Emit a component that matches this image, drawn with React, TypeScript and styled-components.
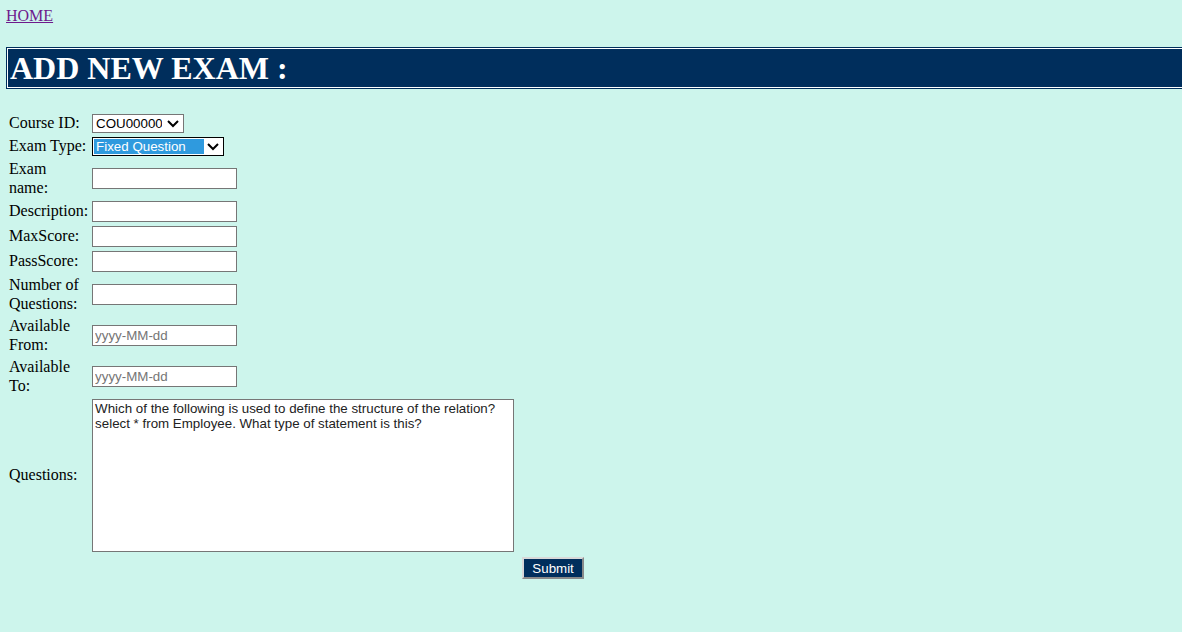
import React from 'react';
import styled, { createGlobalStyle } from 'styled-components';

const GlobalStyle = createGlobalStyle`
  html, body {
    margin: 0;
    padding: 0;
    overflow: hidden;
    background: #cdf5ec;
  }
  body {
    font-family: "Liberation Serif", "Times New Roman", serif;
    font-size: 16px;
    color: #000000;
  }
`;

const Page = styled.div`
  padding: 6px 0 0 6px;
`;

const HomeLink = styled.a`
  color: #6e1a8c;
  text-decoration: underline;
  font-size: 16px;
  line-height: 19px;
  display: inline-block;
`;

const Banner = styled.div`
  margin-top: 22px;
  width: calc(100% + 20px);
  border: 1px solid #002e5c;
  padding: 1px;
  background: #ffffff;
`;

const BannerTitle = styled.h1`
  margin: 0;
  background: #002e5c;
  color: #ffffff;
  font-size: 32px;
  font-weight: bold;
  line-height: 38px;
  padding-left: 2px;
`;

const FormTable = styled.table`
  margin-top: 22px;
  border-collapse: separate;
  border-spacing: 2px;
`;

const LabelCell = styled.td`
  width: 79px;
  padding: 1px;
  vertical-align: middle;
  line-height: 18.5px;
`;

const FieldCell = styled.td<{ $top?: boolean }>`
  padding: 1px;
  line-height: 18px;
  vertical-align: ${(p) => (p.$top ? 'top' : 'middle')};
`;

const SelectBox = styled.div<{ $focused?: boolean; $width: number }>`
  display: flex;
  align-items: center;
  box-sizing: border-box;
  width: ${(p) => p.$width}px;
  height: 19px;
  border: 1px solid ${(p) => (p.$focused ? '#000000' : '#767676')};
  background: #ffffff;
  padding: 1px;
`;

const NativeSelect = styled.select<{ $highlight?: boolean }>`
  appearance: none;
  -webkit-appearance: none;
  border: none;
  outline: none;
  margin: 0;
  flex: 1;
  min-width: 0;
  height: 15px;
  padding: 0 2px;
  font-family: "Liberation Sans", Arial, sans-serif;
  font-size: 13.33px;
  line-height: 15px;
  background: ${(p) => (p.$highlight ? '#2f9ade' : '#ffffff')};
  color: ${(p) => (p.$highlight ? '#ffffff' : '#000000')};
`;

const Chevron = styled.svg`
  width: 18px;
  height: 15px;
  flex: none;
`;

const TextInput = styled.input`
  display: block;
  box-sizing: border-box;
  width: 145px;
  height: 21px;
  margin: 0;
  padding: 1px 2px;
  border: 1px solid #767676;
  background: #ffffff;
  font-family: "Liberation Sans", Arial, sans-serif;
  font-size: 13.33px;

  &::placeholder {
    color: #757575;
  }
`;

const QuestionArea = styled.textarea`
  display: block;
  box-sizing: border-box;
  width: 422px;
  height: 153px;
  margin: 0;
  padding: 1px 2px;
  border: 1px solid #767676;
  background: #ffffff;
  color: #222222;
  font-family: "Liberation Sans", Arial, sans-serif;
  font-size: 13.33px;
  line-height: 15px;
  resize: none;
`;

const SubmitButton = styled.button`
  display: block;
  box-sizing: border-box;
  width: 62px;
  height: 22px;
  margin: 1px 0 0 4px;
  padding: 0;
  background: #002e5c;
  color: #ffffff;
  font-family: "Liberation Sans", Arial, sans-serif;
  font-size: 13.33px;
  border-style: solid;
  border-width: 2px;
  border-color: #d8d8d8 #8a8a8a #8a8a8a #d8d8d8;
`;

const ChevronIcon: React.FC = () => (
  <Chevron viewBox="0 0 18 15">
    <path d="M4 5 L9 10 L14 5" fill="none" stroke="#000000" strokeWidth="2" />
  </Chevron>
);

const App: React.FC = () => {
  const questions =
    'Which of the following is used to define the structure of the relation?\nselect * from Employee. What type of statement is this?';

  return (
    <Page>
      <GlobalStyle />
      <HomeLink href="#">HOME</HomeLink>
      <Banner>
        <BannerTitle>ADD NEW EXAM :</BannerTitle>
      </Banner>

      <FormTable>
        <tbody>
          <tr>
            <LabelCell>Course ID:</LabelCell>
            <FieldCell>
              <SelectBox $width={92}>
                <NativeSelect defaultValue="COU00000">
                  <option>COU00000</option>
                </NativeSelect>
                <ChevronIcon />
              </SelectBox>
            </FieldCell>
          </tr>
          <tr>
            <LabelCell>Exam Type:</LabelCell>
            <FieldCell>
              <SelectBox $width={132} $focused>
                <NativeSelect $highlight defaultValue="Fixed Question">
                  <option>Fixed Question</option>
                  <option>Random Question</option>
                </NativeSelect>
                <ChevronIcon />
              </SelectBox>
            </FieldCell>
          </tr>
          <tr>
            <LabelCell>Exam<br />name:</LabelCell>
            <FieldCell><TextInput type="text" /></FieldCell>
          </tr>
          <tr>
            <LabelCell>Description:</LabelCell>
            <FieldCell><TextInput type="text" /></FieldCell>
          </tr>
          <tr>
            <LabelCell>MaxScore:</LabelCell>
            <FieldCell><TextInput type="text" /></FieldCell>
          </tr>
          <tr>
            <LabelCell>PassScore:</LabelCell>
            <FieldCell><TextInput type="text" /></FieldCell>
          </tr>
          <tr>
            <LabelCell>Number of<br />Questions:</LabelCell>
            <FieldCell><TextInput type="text" /></FieldCell>
          </tr>
          <tr>
            <LabelCell>Available<br />From:</LabelCell>
            <FieldCell><TextInput type="text" placeholder="yyyy-MM-dd" /></FieldCell>
          </tr>
          <tr>
            <LabelCell>Available<br />To:</LabelCell>
            <FieldCell><TextInput type="text" placeholder="yyyy-MM-dd" /></FieldCell>
          </tr>
          <tr>
            <LabelCell>Questions:</LabelCell>
            <FieldCell>
              <QuestionArea defaultValue={questions} />
            </FieldCell>
          </tr>
          <tr>
            <LabelCell />
            <FieldCell />
            <FieldCell $top>
              <SubmitButton type="submit">Submit</SubmitButton>
            </FieldCell>
          </tr>
        </tbody>
      </FormTable>
    </Page>
  );
};

export default App;
